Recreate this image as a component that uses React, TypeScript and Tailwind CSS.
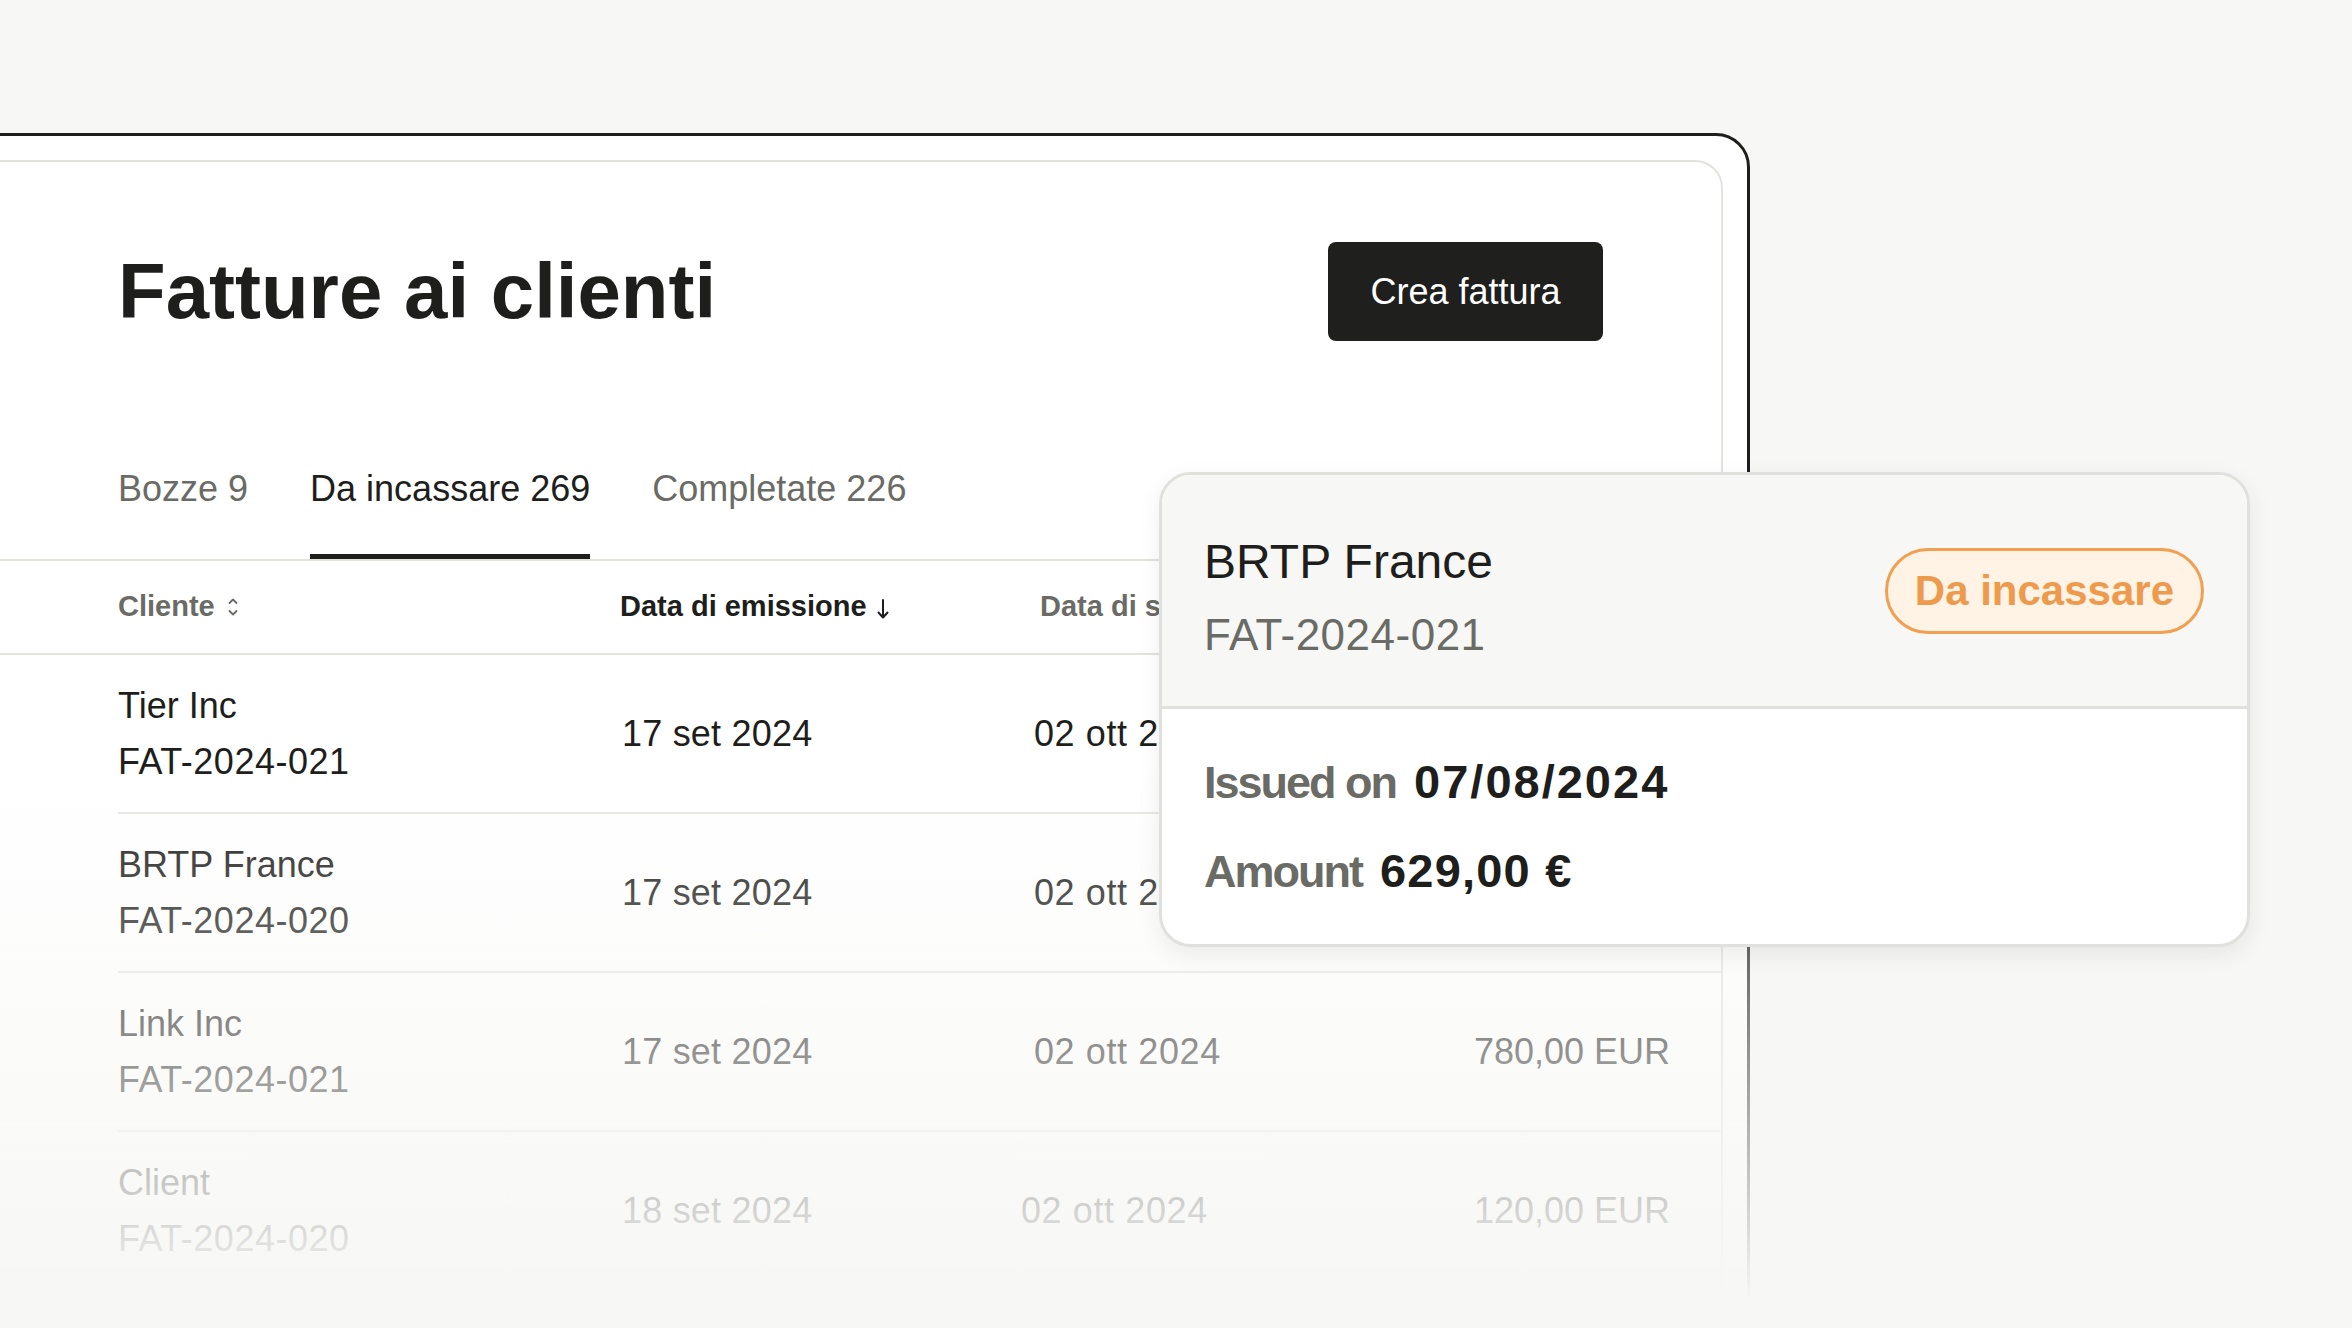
import React from "react";

type Row = {
  name: string;
  code: string;
  issued: string;
  due: string;
  amount: string;
  shift?: boolean;
};

const rows: Row[] = [
  { name: "Tier Inc", code: "FAT-2024-021", issued: "17 set 2024", due: "02 ott 2024", amount: "1.250,00 EUR" },
  { name: "BRTP France", code: "FAT-2024-020", issued: "17 set 2024", due: "02 ott 2024", amount: "629,00 EUR" },
  { name: "Link Inc", code: "FAT-2024-021", issued: "17 set 2024", due: "02 ott 2024", amount: "780,00 EUR" },
  { name: "Client", code: "FAT-2024-020", issued: "18 set 2024", due: "02 ott 2024", amount: "120,00 EUR", shift: true },
];

function SortIcon() {
  return (
    <svg width="12" height="22" viewBox="0 0 12 22" fill="none" className="ml-[12px]">
      <path d="M2.5 7 L6 3.5 L9.5 7" stroke="#6b6b66" strokeWidth="1.8" strokeLinecap="round" strokeLinejoin="round" />
      <path d="M2.5 15 L6 18.5 L9.5 15" stroke="#6b6b66" strokeWidth="1.8" strokeLinecap="round" strokeLinejoin="round" />
    </svg>
  );
}

function DownArrow() {
  return (
    <svg width="14" height="24" viewBox="0 0 14 24" fill="none" className="ml-[9px] mt-[4px]">
      <path d="M7 3 L7 20" stroke="#1e1e1c" strokeWidth="2" strokeLinecap="round" />
      <path d="M2.5 15.5 L7 20.5 L11.5 15.5" stroke="#1e1e1c" strokeWidth="2" strokeLinecap="round" strokeLinejoin="round" />
    </svg>
  );
}

export default function App() {
  return (
    <div className="relative h-[1328px] w-[2352px] overflow-hidden bg-[#f7f7f5] font-['Liberation_Sans',Arial,sans-serif] text-[#1e1e1c]">
      <div className="flex pt-[133px]">
        <div className="ml-[-60px] h-[1300px] w-[1810px] shrink-0 rounded-[34px] border-[3px] border-[#1e1e1c] bg-white pl-[24px] pr-[24px] pt-[24px]">
          <div className="h-[1400px] rounded-[28px] border-2 border-[#e2e2de] bg-white">
            {/* Title row */}
            <div className="flex items-center justify-between pl-[149px] pr-[118px] pt-[80px]">
              <h1 className="text-[78px] font-bold leading-[99px]">Fatture ai clienti</h1>
              <button className="flex h-[99px] w-[275px] items-center justify-center rounded-[8px] bg-[#1f1f1d] text-[36px] text-white">
                Crea fattura
              </button>
            </div>

            {/* Tabs */}
            <div className="mt-[126px] flex gap-[62px] border-b-2 border-[#e2e2de] pl-[149px]">
              <div className="pb-[48px] text-[36px] leading-[44px] text-[#6b6b66]">Bozze 9</div>
              <div className="relative pb-[48px] text-[36px] leading-[44px] text-[#1e1e1c]">
                Da incassare 269
                <div className="absolute bottom-0 left-0 right-0 h-[5px] bg-[#1e1e1c]" />
              </div>
              <div className="pb-[48px] text-[36px] leading-[44px] text-[#6b6b66]">Completate 226</div>
            </div>

            {/* Header row */}
            <div className="flex h-[94px] items-center border-b-2 border-[#e2e2de] pl-[149px] text-[29px] font-bold">
              <div className="flex w-[502px] items-center text-[#6b6b66]">
                Cliente
                <SortIcon />
              </div>
              <div className="flex w-[414px] items-center text-[#1e1e1c]">
                Data di emissione
                <DownArrow />
              </div>
              <div className="flex-1 pl-[6px] text-[#6b6b66]">Data di scadenza</div>
              <div className="pr-[51px] text-right text-[#6b6b66]">Importo</div>
            </div>

            {/* Rows */}
            {rows.map((r) => (
              <div
                key={r.name}
                className="ml-[149px] flex items-center border-b-2 border-[#e6e6e2] pb-[22px] pt-[23px] text-[36px]"
              >
                <div className="flex w-[504px] flex-col leading-[56px]">
                  <span>{r.name}</span>
                  <span className="tracking-[0.5px]">{r.code}</span>
                </div>
                <div className="w-[412px] tracking-[0.2px]">{r.issued}</div>
                <div className={r.shift ? "ml-[-13px] flex-1 tracking-[0.6px]" : "flex-1 tracking-[0.6px]"}>{r.due}</div>
                <div className="pr-[51px] text-right">{r.amount}</div>
              </div>
            ))}
          </div>
        </div>
      </div>

      {/* Bottom fade */}
      <div className="pointer-events-none absolute bottom-0 left-0 right-0 h-[560px] bg-linear-to-b from-[#f7f7f500] to-[#f7f7f5] to-95%" />

      {/* Popup card */}
      <div className="absolute left-[1159px] top-[472px] flex h-[475px] w-[1091px] flex-col overflow-hidden rounded-[32px] border-[3px] border-[#e0e0dc] bg-white shadow-[0_8px_24px_rgba(0,0,0,0.07)]">
        <div className="flex h-[234px] shrink-0 items-center justify-between border-b-[3px] border-[#e0e0dc] bg-[#f7f7f5] pl-[42px] pr-[43px]">
          <div className="mt-[16px] flex flex-col">
            <span className="text-[48px] leading-[58px] text-[#1e1e1c]">BRTP France</span>
            <span className="mt-[15px] text-[44px] leading-[58px] tracking-[0.5px] text-[#6b6b66]">FAT-2024-021</span>
          </div>
          <div className="flex h-[86px] items-center rounded-full border-[3px] border-[#f0a050] bg-[#fff3e6] px-[27px] text-[42px] font-bold text-[#ee9a4d]">
            Da incassare
          </div>
        </div>
        <div className="flex flex-col gap-[32px] pl-[42px] pt-[45px] font-bold leading-[56px]">
          <div className="flex items-baseline gap-[18px]">
            <span className="text-[45px] tracking-[-2px] text-[#6b6b66]">Issued on</span>
            <span className="text-[47px] tracking-[2px] text-[#1e1e1c]">07/08/2024</span>
          </div>
          <div className="flex items-baseline gap-[18px]">
            <span className="text-[45px] tracking-[-2px] text-[#6b6b66]">Amount</span>
            <span className="text-[47px] tracking-[1.2px] text-[#1e1e1c]">629,00 €</span>
          </div>
        </div>
      </div>
    </div>
  );
}
